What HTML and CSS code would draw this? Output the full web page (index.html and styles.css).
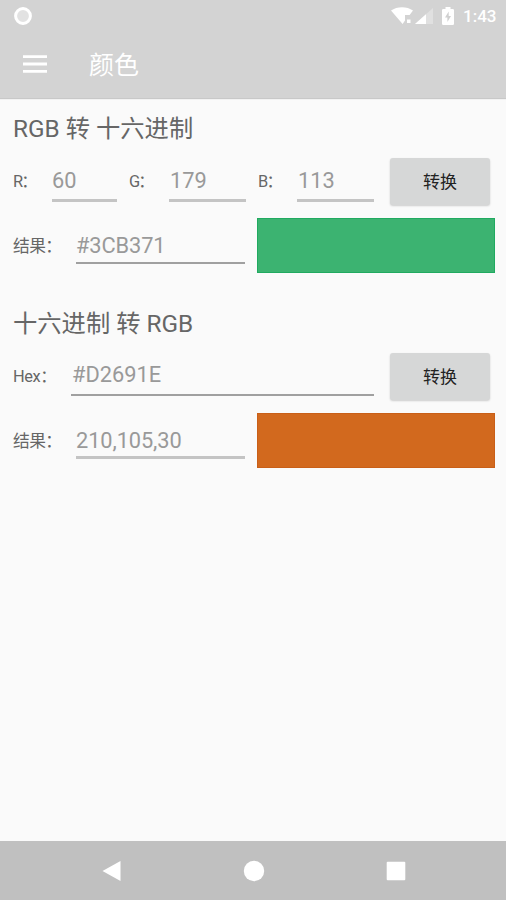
FILE: index.html
```html
<!DOCTYPE html>
<html lang="zh-CN">
<head>
<meta charset="utf-8">
<title>颜色</title>
<link rel="stylesheet" href="styles.css">
</head>
<body>
<header class="top">
  <div class="status">
    <svg class="ring" width="20" height="20" viewBox="0 0 20 20"><circle cx="10" cy="10" r="7.4" fill="#e2e2e2" stroke="#fff" stroke-width="3"/></svg>
    <svg class="wifi" width="22" height="18" viewBox="0 0 22 18"><path d="M0 3.5C6-1 16-1 22 3.5L18.6 8H14v5.400L11.600 17Z" fill="#fff"/><path d="M16 12.500h3.500V16H16z" fill="#fff"/></svg>
    <svg class="signal" width="18" height="16" viewBox="0 0 18 16"><path d="M0 16 18 0V16Z" fill="#e0e0e0"/><path d="M0 16 11 6.200V16Z" fill="#fff"/></svg>
    <svg class="battery" width="12" height="18" viewBox="0 0 12 18"><path d="M1.300 2H3.500V0h5v2h2.200Q12 2 12 3.300V16.700Q12 18 10.700 18H1.300Q0 18 0 16.700V3.300Q0 2 1.300 2Z" fill="#fff"/><path d="M6.700 4.500 3 10.500h2.400v4.500L9 9H6.700Z" fill="#d0d0d0"/></svg>
    <span class="clock">1:43</span>
  </div>
  <div class="appbar">
    <svg class="menu" width="24" height="18" viewBox="0 0 24 18"><path d="M0 1.700h24M0 9h24M0 16.300h24" stroke="#fff" stroke-width="2.800"/></svg>
    <h1>颜色</h1>
  </div>
</header>
<main>
  <section>
    <h2>RGB 转 十六进制</h2>
    <div class="row rgb">
      <label>R：</label><div class="field">60</div>
      <label>G：</label><div class="field">179</div>
      <label>B：</label><div class="field">113</div>
      <button>转换</button>
    </div>
    <div class="row result">
      <label>结果：</label><div class="field thin">#3CB371</div>
      <div class="swatch green"></div>
    </div>
  </section>
  <section>
    <h2>十六进制 转 RGB</h2>
    <div class="row hex">
      <label>Hex：</label><div class="field thin">#D2691E</div>
      <button>转换</button>
    </div>
    <div class="row result">
      <label>结果：</label><div class="field">210,105,30</div>
      <div class="swatch orange"></div>
    </div>
  </section>
</main>
<nav>
  <svg width="20" height="22" viewBox="0 0 20 22"><path d="M.5 11 18.500 1V21Z" fill="#fff"/></svg>
  <svg width="22" height="22" viewBox="0 0 22 22"><circle cx="11" cy="11" r="10.200" fill="#fff"/></svg>
  <svg width="20" height="22" viewBox="0 0 20 22"><rect x=".7" y="1.700" width="18.600" height="18.600" rx="1" fill="#fff"/></svg>
</nav>
</body>
</html>
```
FILE: styles.css
```css
* { box-sizing: border-box; }
body {
  margin: 0;
  height: 900px;
  display: flex;
  flex-direction: column;
  background: #fafafa;
  color: #666;
  font-family: Roboto, "Noto Sans CJK SC", sans-serif;
}
svg { display: block; flex: none; }
.top { height: 98px; background: #d3d3d3; box-shadow: 0 1px 1px #c8c8c8; }
.status { height: 32px; display: flex; align-items: center; padding: 0 9px 0 13px; color: #fff; }
.wifi { margin-left: auto; }
.signal { margin-left: 2px; }
.battery { margin-left: 9px; }
.clock { width: 34px; margin-left: 9px; font-size: 17px; font-weight: 500; line-height: 32px; }
.appbar { height: 66px; display: flex; align-items: center; padding: 0 0 2px 23px; color: #fff; }
h1 { margin: 0 0 0 42px; padding-top: 4px; font-size: 25px; font-weight: 400; line-height: 36px; }
main { flex: 1; padding: 15px 11px 0 13px; }
section { height: 195px; }
h2 { margin: 0; height: 45px; font-size: 24.3px; font-weight: 400; line-height: 32px; white-space: nowrap; }
.row { display: grid; }
.rgb { grid-template-columns: 39px 65px 12px 40px 77px 12px 39px 77px 16px 100px; height: 47px; }
.rgb label:nth-of-type(2) { grid-column: 4; }
.rgb label:nth-of-type(3) { grid-column: 7; }
.rgb button { grid-column: 10; }
.hex { grid-template-columns: 58px 303px 16px 100px; height: 47px; }
.hex button { grid-column: 4; }
.result { grid-template-columns: 63px 169px 12px 238px; height: 55px; margin-top: 13px; }
label { font-size: 16.8px; letter-spacing: -0.6px; line-height: 24px; align-self: center; white-space: nowrap; }
.rgb label { font-size: 16.4px; letter-spacing: -1.8px; }
.hex label { font-size: 16.4px; letter-spacing: -0.4px; }
.field {
  height: 43px;
  border-bottom: 2px solid #c4c4c4;
  color: #999;
  font-size: 21.8px;
  line-height: 45px;
}
.rgb .field { height: 43.5px; border-bottom-width: 3px; }
.rgb .field:nth-of-type(n+2) { padding-left: 1px; }
.thin { border-bottom-color: #a0a0a0; }
.hex .thin { height: 43px; padding-left: 1px; line-height: 44px; }
.result .field { height: 46px; line-height: 56px; letter-spacing: -0.1px; }
.result .field:not(.thin) { border-bottom-width: 3px; }
button {
  border: 0;
  border-radius: 3px;
  padding: 0;
  background: #d6d7d7;
  box-shadow: 0 1px 2px #ccc;
  color: #222;
  font: 400 17px/24px Roboto, "Noto Sans CJK SC", sans-serif;
}
.swatch { grid-column: 4; border: 1px solid; }
.green { background: #3cb371; border-color: #20aa60; }
.orange { background: #d2691e; border-color: #c95f18; }
nav { height: 59px; display: flex; justify-content: space-between; padding: 19px 100px 0 102px; background: #c0c0c0; }
```
